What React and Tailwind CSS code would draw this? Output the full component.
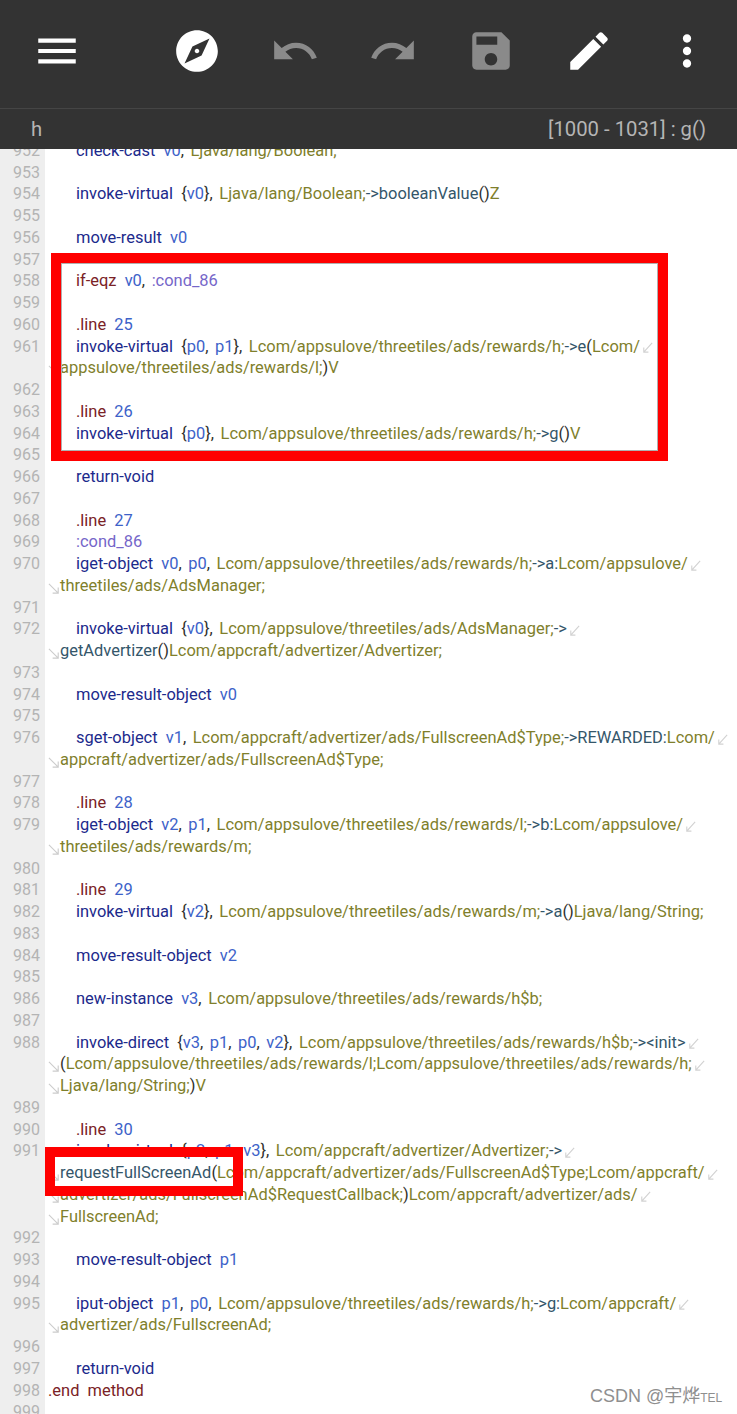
const COLORS = {
  k: "text-[#1c2a8c]",
  e: "text-[#7a2226]",
  r: "text-[#3d62c9]",
  t: "text-[#7f7f2c]",
  m: "text-[#34566a]",
  l: "text-[#7566c9]",
  d: "text-[#30302c]",
};

const ROWS = [
  ["952", "k:check-cast  |r:v0|d:,  |t:Ljava/lang/Boolean;"],
  ["953"],
  ["954", "k:invoke-virtual  |d:{|r:v0|d:},  |t:Ljava/lang/Boolean;|m:->booleanValue|d:()|t:Z"],
  ["955"],
  ["956", "k:move-result  |r:v0"],
  ["957"],
  ["958", "e:if-eqz  |r:v0|d:,  |l::cond_86"],
  ["959"],
  ["960", "e:.line  |r:25"],
  ["961", "k:invoke-virtual  |d:{|r:p0|d:,  |r:p1|d:},  |t:Lcom/appsulove/threetiles/ads/rewards/h;|m:->e|d:(|t:Lcom/", 1],
  ["", "t:appsulove/threetiles/ads/rewards/l;|d:)|t:V"],
  ["962"],
  ["963", "e:.line  |r:26"],
  ["964", "k:invoke-virtual  |d:{|r:p0|d:},  |t:Lcom/appsulove/threetiles/ads/rewards/h;|m:->g|d:()|t:V"],
  ["965"],
  ["966", "k:return-void"],
  ["967"],
  ["968", "e:.line  |r:27"],
  ["969", "l::cond_86"],
  ["970", "k:iget-object  |r:v0|d:,  |r:p0|d:,  |t:Lcom/appsulove/threetiles/ads/rewards/h;|m:->a:|t:Lcom/appsulove/", 1],
  ["", "t:threetiles/ads/AdsManager;"],
  ["971"],
  ["972", "k:invoke-virtual  |d:{|r:v0|d:},  |t:Lcom/appsulove/threetiles/ads/AdsManager;|m:->", 1],
  ["", "m:getAdvertizer|d:()|t:Lcom/appcraft/advertizer/Advertizer;"],
  ["973"],
  ["974", "k:move-result-object  |r:v0"],
  ["975"],
  ["976", "k:sget-object  |r:v1|d:,  |t:Lcom/appcraft/advertizer/ads/FullscreenAd$Type;|m:->REWARDED:|t:Lcom/", 1],
  ["", "t:appcraft/advertizer/ads/FullscreenAd$Type;"],
  ["977"],
  ["978", "e:.line  |r:28"],
  ["979", "k:iget-object  |r:v2|d:,  |r:p1|d:,  |t:Lcom/appsulove/threetiles/ads/rewards/l;|m:->b:|t:Lcom/appsulove/", 1],
  ["", "t:threetiles/ads/rewards/m;"],
  ["980"],
  ["981", "e:.line  |r:29"],
  ["982", "k:invoke-virtual  |d:{|r:v2|d:},  |t:Lcom/appsulove/threetiles/ads/rewards/m;|m:->a|d:()|t:Ljava/lang/String;"],
  ["983"],
  ["984", "k:move-result-object  |r:v2"],
  ["985"],
  ["986", "k:new-instance  |r:v3|d:,  |t:Lcom/appsulove/threetiles/ads/rewards/h$b;"],
  ["987"],
  ["988", "k:invoke-direct  |d:{|r:v3|d:,  |r:p1|d:,  |r:p0|d:,  |r:v2|d:},  |t:Lcom/appsulove/threetiles/ads/rewards/h$b;|m:-><init>", 1],
  ["", "d:(|t:Lcom/appsulove/threetiles/ads/rewards/l;Lcom/appsulove/threetiles/ads/rewards/h;", 1],
  ["", "t:Ljava/lang/String;|d:)|t:V"],
  ["989"],
  ["990", "e:.line  |r:30"],
  ["991", "k:invoke-virtual  |d:{|r:p2|d:,  |r:p1|d:,  |r:v3|d:},  |t:Lcom/appcraft/advertizer/Advertizer;|m:->", 1],
  ["", "m:requestFullScreenAd|d:(|t:Lcom/appcraft/advertizer/ads/FullscreenAd$Type;Lcom/appcraft/", 1],
  ["", "t:advertizer/ads/FullscreenAd$RequestCallback;|d:)|t:Lcom/appcraft/advertizer/ads/", 1],
  ["", "t:FullscreenAd;"],
  ["992"],
  ["993", "k:move-result-object  |r:p1"],
  ["994"],
  ["995", "k:iput-object  |r:p1|d:,  |r:p0|d:,  |t:Lcom/appsulove/threetiles/ads/rewards/h;|m:->g:|t:Lcom/appcraft/", 1],
  ["", "t:advertizer/ads/FullscreenAd;"],
  ["996"],
  ["997", "k:return-void"],
  ["998", "e:.end  method", 0, 1],
  ["999"],
];

const Icon = ({ d, className }) => (
  <svg viewBox="0 0 24 24" className={`w-[50px] h-[50px] shrink-0 fill-current ${className}`}>
    <path d={d} />
  </svg>
);

const ArrowEnd = () => (
  <svg viewBox="0 0 14 14" className="w-[13px] h-[13px] ml-[1px] mt-[3px] shrink-0 self-center" fill="none" stroke="#d2d2d2" strokeWidth="1.2">
    <path d="M12 2 L3 12 M3 7 V12 H8" />
  </svg>
);

const ArrowStart = () => (
  <svg viewBox="0 0 14 14" className="absolute left-[3px] top-[7px] w-[13px] h-[13px]" fill="none" stroke="#cccccc" strokeWidth="1.2">
    <path d="M1 2 L11 12 M11 6 V12 H5" />
  </svg>
);

function Row({ num, code, wrapped, flush, cont }) {
  const tokens = code ? code.split("|") : [];
  return (
    <div className="flex h-[21.75px] leading-[21.75px]">
      <div className="w-[45px] shrink-0 bg-[#eeeeee] text-right pr-[5px] text-[16px] text-[#b4b4b4]">{num}</div>
      <div className={`relative flex whitespace-pre ${cont ? "pl-[15px]" : flush ? "pl-[3px]" : "pl-[31px]"}`}>
        {cont && <ArrowStart />}
        <span>
          {tokens.map((tok, i) => (
            <span key={i} className={`${COLORS[tok[0]]} ${tok.endsWith(",  ") ? "mr-[-1.6px]" : ""}`}>{tok.slice(2)}</span>
          ))}
        </span>
        {wrapped ? <ArrowEnd /> : null}
      </div>
    </div>
  );
}

export default function App() {
  return (
    <div className="relative w-[737px] h-[1414px] overflow-hidden bg-white font-['Roboto',sans-serif] text-[16.45px]">
      <header className="relative z-10 bg-[#333333]">
        <div className="h-[108px] flex items-start pt-[26px] pl-[32px] text-white">
          <Icon className="text-white" d="M3 18h18v-2H3v2zm0-5h18v-2H3v2zm0-7v2h18V6H3z" />
          <div className="ml-[90px] flex gap-[48px]">
            <Icon className="text-white" d="M12 10.9c-.61 0-1.1.49-1.1 1.1s.49 1.1 1.1 1.1c.61 0 1.1-.49 1.1-1.1s-.49-1.1-1.1-1.1zM12 2C6.48 2 2 6.48 2 12s4.48 10 10 10 10-4.48 10-10S17.52 2 12 2zm2.19 12.19L6 18l3.81-8.19L18 6l-3.81 8.19z" />
            <Icon className="text-[#8a8a8a]" d="M12.5 8c-2.65 0-5.05.99-6.9 2.6L2 7v9h9l-3.62-3.62c1.39-1.16 3.16-1.88 5.12-1.88 3.54 0 6.55 2.31 7.6 5.5l2.37-.78C21.08 11.03 17.15 8 12.5 8z" />
            <Icon className="text-[#8a8a8a]" d="M18.4 10.6C16.55 8.99 14.15 8 11.5 8c-4.65 0-8.58 3.03-9.96 7.22L3.9 16c1.05-3.19 4.05-5.5 7.6-5.5 1.95 0 3.73.72 5.12 1.88L13 16h9V7l-3.6 3.6z" />
            <Icon className="text-[#8a8a8a]" d="M17 3H5c-1.11 0-2 .9-2 2v14c0 1.1.89 2 2 2h14c1.1 0 2-.9 2-2V7l-4-4zm-5 16c-1.66 0-3-1.34-3-3s1.34-3 3-3 3 1.34 3 3-1.34 3-3 3zm3-10H5V5h10v4z" />
            <Icon className="text-white" d="M3 17.25V21h3.75L17.81 9.94l-3.75-3.75L3 17.25zM20.71 7.04c.39-.39.39-1.02 0-1.41l-2.34-2.34c-.39-.39-1.02-.39-1.41 0l-1.83 1.83 3.75 3.75 1.83-1.83z" />
            <Icon className="text-white" d="M12 8c1.1 0 2-.9 2-2s-.9-2-2-2-2 .9-2 2 .9 2 2 2zm0 2c-1.1 0-2 .9-2 2s.9 2 2 2 2-.9 2-2-.9-2-2-2zm0 6c-1.1 0-2 .9-2 2s.9 2 2 2 2-.9 2-2-.9-2-2-2z" />
          </div>
        </div>
        <div className="h-[41px] border-t border-[#454545] flex items-center justify-between pl-[31px] pr-[31px] text-[20.3px] text-[#b5b5b5]">
          <span>h</span>
          <span>[1000 - 1031] : g()</span>
        </div>
      </header>

      <main className="-mt-[9.25px]">
        {ROWS.map((r, i) => (
          <Row key={i} num={r[0]} code={r[1]} wrapped={r[2] === 1} flush={r[3] === 1} cont={r[0] === ""} />
        ))}
      </main>

      <div className="absolute left-[51px] top-[253px] w-[617px] h-[208px] border-[10px] border-[#ff0000]">
        <div className="w-full h-full border border-[#b0b0b0]" />
      </div>
      <div className="absolute left-[45px] top-[1147px] w-[198px] h-[49px] border-[10px] border-[#ff0000]" />

      <div className="absolute left-[590px] top-[1384px] text-[18px] leading-[24px] text-[#8f8f8f] font-['Liberation_Sans','Noto_Sans_CJK_SC',sans-serif] whitespace-pre">
        CSDN @宇烨<span className="text-[12px]">TEL</span>
      </div>
    </div>
  );
}
